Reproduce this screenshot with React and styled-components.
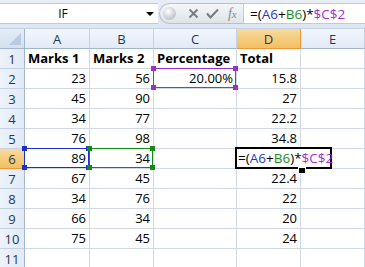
import React from 'react';
import styled, { createGlobalStyle, css } from 'styled-components';

const GlobalStyle = createGlobalStyle`
  body {
    margin: 0;
    background: #ffffff;
    font-family: "Open Sans", "Liberation Sans", sans-serif;
  }
`;

const Window = styled.div`
  width: 365px;
  height: 267px;
  overflow: hidden;
  background: #ffffff;
`;

const FormulaBar = styled.div`
  height: 29px;
  box-sizing: border-box;
  padding-top: 3px;
  display: flex;
  align-items: flex-start;
  background: linear-gradient(#e9eef6, #dde6f2);
  border-bottom: 1px solid #c5d2e3;
`;

const NameBox = styled.div`
  width: 158px;
  height: 21px;
  box-sizing: border-box;
  background: #ffffff;
  border-top: 1px solid #c0cbd9;
  border-bottom: 1px solid #c0cbd9;
  display: flex;
  align-items: center;
  font-size: 12px;
  color: #000;
  span {
    flex: 1;
    text-align: center;
    padding-right: 20px;
  }
`;

const DropArrow = styled.div`
  width: 0;
  height: 0;
  margin-right: 4px;
  border-left: 4px solid transparent;
  border-right: 4px solid transparent;
  border-top: 4px solid #000;
`;

const ButtonPill = styled.div`
  width: 84px;
  height: 21px;
  margin-left: 1px;
  box-sizing: border-box;
  border-radius: 11px 0 0 11px;
  background: linear-gradient(#f4f6f9, #dfe4ea);
  border: 1px solid #b6c1cf;
  border-right: none;
  display: flex;
  align-items: center;
  padding-left: 3px;
`;

const Ball = styled.div`
  width: 13px;
  height: 13px;
  border-radius: 50%;
  background: radial-gradient(circle at 40% 35%, #ffffff 0, #d5d9de 45%, #a9afb7 100%);
  margin-right: 9px;
`;

const IconSlot = styled.div`
  width: 19px;
  height: 19px;
  display: flex;
  align-items: center;
  justify-content: center;
`;

const Fx = styled.div`
  width: 22px;
  font-family: "Liberation Serif", serif;
  font-style: italic;
  font-size: 14px;
  color: #8a8a8a;
  text-align: center;
  span {
    font-size: 11px;
  }
`;

const FormulaInput = styled.div`
  flex: 1;
  height: 21px;
  box-sizing: border-box;
  background: #ffffff;
  border-top: 1px solid #c0cbd9;
  border-bottom: 1px solid #c0cbd9;
  border-left: 1px solid #c0cbd9;
  padding-left: 6px;
  display: flex;
  align-items: center;
  font-size: 13.5px;
  color: #000;
`;

const Sheet = styled.div`
  display: grid;
  grid-template-columns: 25px 65px 64px 83px 64px 1fr;
  grid-auto-rows: 20px;
`;

const Corner = styled.div`
  box-sizing: border-box;
  background: linear-gradient(#e4ecf7, #d5e1f0);
  border-right: 1px solid #9eb6ce;
  border-bottom: 1px solid #9eb6ce;
  position: relative;
  &::after {
    content: '';
    position: absolute;
    right: 3px;
    bottom: 3px;
    width: 0;
    height: 0;
    border-left: 12px solid transparent;
    border-bottom: 12px solid #b8cbe2;
  }
`;

const headerBase = css`
  box-sizing: border-box;
  display: flex;
  align-items: center;
  justify-content: center;
  font-size: 13px;
  color: #1e395b;
`;

const ColHeader = styled.div`
  ${headerBase}
  padding-top: 1px;
  background: ${p => p.$active
    ? 'linear-gradient(#f9d99f, #f1c15f)'
    : 'linear-gradient(#f3f7fc, #e1eaf6)'};
  border-right: 1px solid ${p => p.$active ? '#f29536' : '#c5d2e3'};
  border-bottom: 1px solid ${p => p.$active ? '#f29536' : '#9eb6ce'};
`;

const RowHeader = styled.div`
  ${headerBase}
  background: ${p => p.$active
    ? 'linear-gradient(#f9d99f, #f1c15f)'
    : 'linear-gradient(90deg, #eef3fa, #e1eaf6)'};
  border-right: 1px solid ${p => p.$active ? '#f29536' : '#9eb6ce'};
  border-bottom: 1px solid ${p => p.$active ? '#f29536' : '#c5d2e3'};
`;

const Cell = styled.div`
  box-sizing: border-box;
  position: relative;
  border-right: 1px solid #d0d7e5;
  border-bottom: 1px solid #d0d7e5;
  display: flex;
  align-items: flex-end;
  justify-content: ${p => p.$left ? 'flex-start' : 'flex-end'};
  padding: 0 3px 1px 3px;
  font-size: 13px;
  font-weight: ${p => p.$bold ? 700 : 400};
  color: #000;
  white-space: nowrap;
`;

const RefBox = styled.div`
  position: absolute;
  left: -1px;
  top: -1px;
  right: 0;
  bottom: 0;
  border: 1px solid ${p => p.$color};
  pointer-events: none;
  z-index: 2;
`;

const Handle = styled.div`
  position: absolute;
  width: 5px;
  height: 5px;
  background: ${p => p.$color};
  ${p => p.$v}: -3px;
  ${p => p.$h}: -3px;
`;

const EditBox = styled.div`
  position: absolute;
  left: -2px;
  top: -2px;
  width: 97px;
  height: 22px;
  box-sizing: border-box;
  border: 2px solid #000;
  background: #ffffff;
  z-index: 3;
  display: flex;
  align-items: center;
  padding-left: 1px;
  font-size: 13.5px;
  white-space: nowrap;
`;

const FillHandle = styled.div`
  position: absolute;
  left: 61px;
  top: 18px;
  width: 6px;
  height: 5px;
  background: #000;
  border: 1px solid #fff;
  z-index: 4;
`;

const Caret = styled.span`
  display: inline-block;
  width: 1px;
  height: 15px;
  background: #000;
  margin-left: 1px;
`;

const Tok = styled.span`
  color: ${p => p.$c || '#000'};
`;

function Ref({ color }) {
  return (
    <RefBox $color={color}>
      <Handle $color={color} $v="top" $h="left" />
      <Handle $color={color} $v="top" $h="right" />
      <Handle $color={color} $v="bottom" $h="left" />
      <Handle $color={color} $v="bottom" $h="right" />
    </RefBox>
  );
}

const CrossIcon = () => (
  <svg width="11" height="11" viewBox="0 0 11 11">
    <path d="M1.5 1.5 L9.5 9.5 M9.5 1.5 L1.5 9.5" stroke="#7a7a7a" strokeWidth="1.8" fill="none" />
  </svg>
);

const CheckIcon = () => (
  <svg width="13" height="11" viewBox="0 0 13 11">
    <path d="M1 5.5 L4.5 9.5 L12 1.5" stroke="#7a7a7a" strokeWidth="2" fill="none" />
  </svg>
);

const Formula = () => (
  <>
    <Tok>=(</Tok>
    <Tok $c="#2a36c8">A6</Tok>
    <Tok>+</Tok>
    <Tok $c="#1f8a1f">B6</Tok>
    <Tok>)*</Tok>
    <Tok $c="#a030d0">$C$2</Tok>
  </>
);

const rows = [
  ['Marks 1', 'Marks 2', 'Percentage', 'Total'],
  ['23', '56', '20.00%', '15.8'],
  ['45', '90', '', '27'],
  ['34', '77', '', '22.2'],
  ['76', '98', '', '34.8'],
  ['89', '34', '', 'EDIT'],
  ['67', '45', '', '22.4'],
  ['34', '76', '', '22'],
  ['66', '34', '', '20'],
  ['75', '45', '', '24'],
  ['', '', '', ''],
];

const cols = ['A', 'B', 'C', 'D', 'E'];

export default function App() {
  return (
    <Window>
      <GlobalStyle />
      <FormulaBar>
        <NameBox>
          <span>IF</span>
          <DropArrow />
        </NameBox>
        <ButtonPill>
          <Ball />
          <IconSlot><CrossIcon /></IconSlot>
          <IconSlot><CheckIcon /></IconSlot>
          <Fx>f<span>x</span></Fx>
        </ButtonPill>
        <FormulaInput><Formula /></FormulaInput>
      </FormulaBar>
      <Sheet>
        <Corner />
        {cols.map(c => (
          <ColHeader key={c} $active={c === 'D'}>{c}</ColHeader>
        ))}
        {rows.map((r, i) => {
          const n = i + 1;
          return (
            <React.Fragment key={n}>
              <RowHeader $active={n === 6}>{n}</RowHeader>
              {r.map((v, j) => {
                const bold = n === 1;
                if (v === 'EDIT') {
                  return (
                    <Cell key={j}>
                      <EditBox><Formula /><Caret /></EditBox>
                      <FillHandle />
                    </Cell>
                  );
                }
                return (
                  <Cell key={j} $bold={bold} $left={bold}>
                    {v}
                    {n === 2 && j === 2 && <Ref color="#9b30c8" />}
                    {n === 6 && j === 0 && <Ref color="#1a2fd0" />}
                    {n === 6 && j === 1 && <Ref color="#138a13" />}
                  </Cell>
                );
              })}
              <Cell />
            </React.Fragment>
          );
        })}
      </Sheet>
    </Window>
  );
}
